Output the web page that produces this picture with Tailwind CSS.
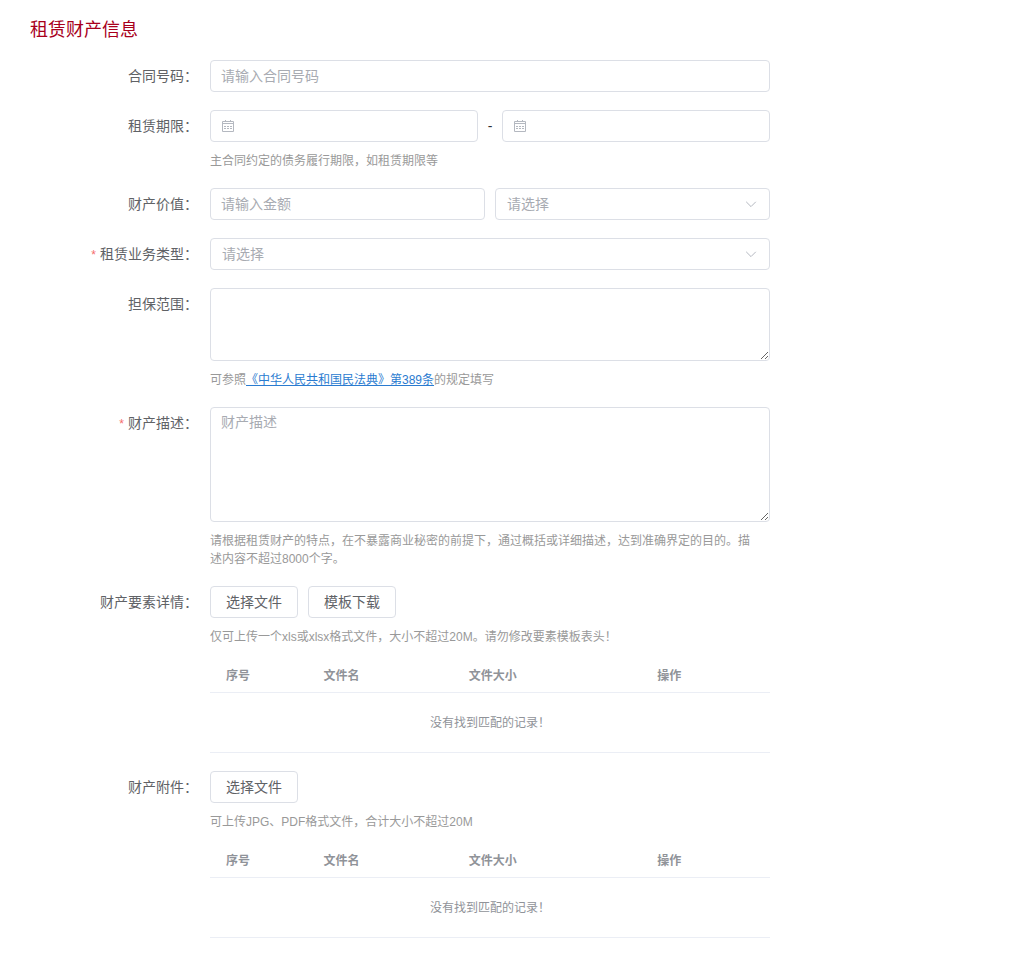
<!DOCTYPE html>
<html lang="zh-CN">
<head>
  <meta charset="utf-8">
  <meta name="viewport" content="width=device-width, initial-scale=1.0">
  <title>租赁财产信息</title>
  <script src="https://cdn.jsdelivr.net/npm/@tailwindcss/browser@4"></script>
</head>
<body class="bg-white text-[#606266] text-sm font-['Liberation_Sans','Noto_Sans_CJK_SC',sans-serif]">
  <form class="px-[30px] pt-4 pb-5">
    <h2 class="text-lg leading-7 text-[#a8001c]">租赁财产信息</h2>

    <div class="max-w-[740px] mt-4 flex flex-col gap-[18px]">
      <!-- 合同号码 -->
      <div class="flex">
        <label for="contractNo" class="w-[180px] shrink-0 pr-3 text-right leading-8">合同号码：</label>
        <input id="contractNo" type="text" placeholder="请输入合同号码" class="flex-1 min-w-0 h-8 px-[10px] border border-[#dcdfe6] rounded placeholder:text-[#a8abb2]">
      </div>

      <!-- 租赁期限 -->
      <div class="flex">
        <label for="startDate" class="w-[180px] shrink-0 pr-3 text-right leading-8">租赁期限：</label>
        <div class="flex-1 min-w-0">
          <div class="flex items-center">
            <div class="flex-1 h-8 flex items-center px-[10px] border border-[#dcdfe6] rounded">
              <svg class="w-[14px] h-[14px] text-[#b4b8c0]" viewBox="0 0 14 14" fill="none" stroke="currentColor"><path d="M1.5 2.5h11v10h-11zM1.5 4.5h11M4.5 1v2M9.5 1v2"/><path d="M3 7.5h8M3 9.5h8" stroke-dasharray="2 1"/></svg>
              <input id="startDate" type="text" class="flex-1 min-w-0 pl-2 outline-none">
            </div>
            <span class="w-6 text-center text-[#303133]">-</span>
            <div class="flex-1 h-8 flex items-center px-[10px] border border-[#dcdfe6] rounded">
              <svg class="w-[14px] h-[14px] text-[#b4b8c0]" viewBox="0 0 14 14" fill="none" stroke="currentColor"><path d="M1.5 2.5h11v10h-11zM1.5 4.5h11M4.5 1v2M9.5 1v2"/><path d="M3 7.5h8M3 9.5h8" stroke-dasharray="2 1"/></svg>
              <input id="endDate" type="text" aria-label="结束日期" class="flex-1 min-w-0 pl-2 outline-none">
            </div>
          </div>
          <p class="mt-[10px] pr-[10px] text-xs leading-[18px] text-[#999]">主合同约定的债务履行期限，如租赁期限等</p>
        </div>
      </div>

      <!-- 财产价值 -->
      <div class="flex">
        <label for="amount" class="w-[180px] shrink-0 pr-3 text-right leading-8">财产价值：</label>
        <div class="flex-1 min-w-0 grid grid-cols-2 gap-[10px]">
          <input id="amount" type="text" placeholder="请输入金额" class="w-full h-8 px-[10px] border border-[#dcdfe6] rounded placeholder:text-[#a8abb2]">
          <div class="relative">
            <select id="currency" aria-label="币种" class="w-full h-8 px-[11px] appearance-none bg-white border border-[#dcdfe6] rounded text-[#a8abb2]"><option>请选择</option></select>
            <svg class="absolute right-[13px] top-[10px] w-3 h-3 text-[#b4b8c0] pointer-events-none" viewBox="0 0 12 12" fill="none" stroke="currentColor"><path d="M1.2 3.8L6 8.6l4.8-4.8"/></svg>
          </div>
        </div>
      </div>

      <!-- 租赁业务类型 -->
      <div class="flex">
        <label for="bizType" class="w-[180px] shrink-0 pr-3 text-right leading-8"><span class="text-[#f56c6c] text-xs mr-1">*</span>租赁业务类型：</label>
        <div class="relative flex-1 min-w-0">
          <select id="bizType" class="w-full h-8 px-[11px] appearance-none bg-white border border-[#dcdfe6] rounded text-[#a8abb2]"><option>请选择</option></select>
          <svg class="absolute right-[13px] top-[10px] w-3 h-3 text-[#b4b8c0] pointer-events-none" viewBox="0 0 12 12" fill="none" stroke="currentColor"><path d="M1.2 3.8L6 8.6l4.8-4.8"/></svg>
        </div>
      </div>

      <!-- 担保范围 -->
      <div class="flex">
        <label for="scope" class="w-[180px] shrink-0 pr-3 text-right leading-8">担保范围：</label>
        <div class="flex-1 min-w-0">
          <textarea id="scope" class="block w-full h-[73px] px-[10px] py-1 border border-[#dcdfe6] rounded resize-y"></textarea>
          <p class="mt-[10px] pr-[10px] text-xs leading-[18px] text-[#999]">可参照<a href="#" class="text-[#2a7bd0] underline">《中华人民共和国民法典》第389条</a>的规定填写</p>
        </div>
      </div>

      <!-- 财产描述 -->
      <div class="flex">
        <label for="desc" class="w-[180px] shrink-0 pr-3 text-right leading-8"><span class="text-[#f56c6c] text-xs mr-1">*</span>财产描述：</label>
        <div class="flex-1 min-w-0">
          <textarea id="desc" placeholder="财产描述" class="block w-full h-[115px] px-[10px] py-1 border border-[#dcdfe6] rounded resize-y placeholder:text-[#a8abb2]"></textarea>
          <p class="mt-[10px] pr-[10px] text-xs leading-[18px] text-[#999]">请根据租赁财产的特点，在不暴露商业秘密的前提下，通过概括或详细描述，达到准确界定的目的。描述内容不超过8000个字。</p>
        </div>
      </div>

      <!-- 财产要素详情 -->
      <div class="flex">
        <div class="w-[180px] shrink-0 pr-3 text-right leading-8">财产要素详情：</div>
        <div class="flex-1 min-w-0">
          <div class="flex gap-[10px]">
            <button type="button" class="h-8 px-[15px] border border-[#dcdfe6] rounded">选择文件</button>
            <button type="button" class="h-8 px-[15px] border border-[#dcdfe6] rounded">模板下载</button>
          </div>
          <p class="mt-[10px] pr-[10px] text-xs leading-[18px] text-[#999]">仅可上传一个xls或xlsx格式文件，大小不超过20M。请勿修改要素模板表头！</p>
          <table class="w-full mt-[13px] table-fixed border-separate border-spacing-0 text-xs text-[#909399]">
            <thead>
              <tr class="h-[34px]">
                <th class="w-[10%] border-b border-[#ebeef5]">序号</th>
                <th class="w-[27%] border-b border-[#ebeef5]">文件名</th>
                <th class="w-[27%] border-b border-[#ebeef5]">文件大小</th>
                <th class="w-[36%] border-b border-[#ebeef5]">操作</th>
              </tr>
            </thead>
            <tbody>
              <tr class="h-[60px]"><td colspan="4" class="text-center border-b border-[#ebeef5]">没有找到匹配的记录！</td></tr>
            </tbody>
          </table>
        </div>
      </div>

      <!-- 财产附件 -->
      <div class="flex">
        <div class="w-[180px] shrink-0 pr-3 text-right leading-8">财产附件：</div>
        <div class="flex-1 min-w-0">
          <button type="button" class="block h-8 px-[15px] border border-[#dcdfe6] rounded">选择文件</button>
          <p class="mt-[10px] pr-[10px] text-xs leading-[18px] text-[#999]">可上传JPG、PDF格式文件，合计大小不超过20M</p>
          <table class="w-full mt-[13px] table-fixed border-separate border-spacing-0 text-xs text-[#909399]">
            <thead>
              <tr class="h-[34px]">
                <th class="w-[10%] border-b border-[#ebeef5]">序号</th>
                <th class="w-[27%] border-b border-[#ebeef5]">文件名</th>
                <th class="w-[27%] border-b border-[#ebeef5]">文件大小</th>
                <th class="w-[36%] border-b border-[#ebeef5]">操作</th>
              </tr>
            </thead>
            <tbody>
              <tr class="h-[60px]"><td colspan="4" class="text-center border-b border-[#ebeef5]">没有找到匹配的记录！</td></tr>
            </tbody>
          </table>
        </div>
      </div>
    </div>
  </form>
</body>
</html>
